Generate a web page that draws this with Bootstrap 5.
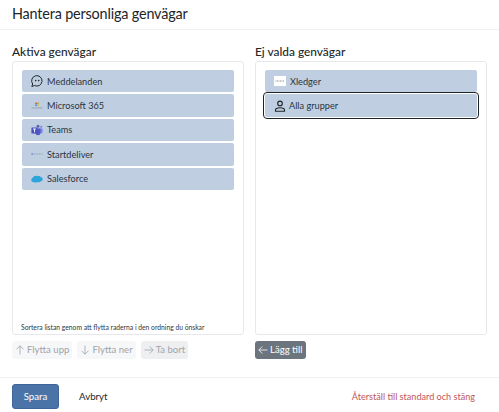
<!DOCTYPE html>
<html lang="sv">
<head>
<meta charset="utf-8">
<title>Hantera personliga genvägar</title>
<link href="https://cdn.jsdelivr.net/npm/bootstrap@5.3.0/dist/css/bootstrap.min.css" rel="stylesheet">
<style>
html,body{height:412px;overflow:hidden}
body{font-family:"Lato","Open Sans",sans-serif;color:#212529;background:#fff}
.dlg-head{height:30px;padding:0 12px;border-bottom:1px solid #eef0f2}
.dlg-title{font-size:14.4px;letter-spacing:-.17px;font-weight:400;line-height:28px;margin:0}
.dlg-body{padding:13px 12px 0;gap:11px;height:347px}
.pane{width:232px}
.pane-title{font-size:11.9px;font-weight:500;line-height:17px;margin:0 0 1px}
.pane-box{height:274px;border:1px solid #e6e8ea;border-radius:3px;padding:8px 9px 0;position:relative}
.pick{height:22.4px;margin-bottom:2px;background:#bfcfe1;border-radius:2px;font-size:9.2px;line-height:1;color:#2c3440;padding-left:9px;gap:4px;border:0;width:100%}
.pick svg{flex:none;width:12px;height:12px}
.pick-on{outline:1.5px solid #1f2328;outline-offset:1px}
.pick-on svg{margin-right:-1px}
.hint{position:absolute;left:8px;bottom:1px;font-size:6.75px;line-height:12px;color:#30363d;white-space:nowrap}
.tools{gap:5px;margin-top:6px}
.tool{height:18px;padding:0 3px;border:0;border-radius:3px;background:#f6f7f8;color:#9ea4aa;font-size:9.6px;gap:2px;line-height:1}
.tool-mid{background:#edeff1}
.tool-dark{background:#6c757d;color:#fff;padding:0 3px}
.tool svg{width:10px;height:10px}
.dlg-foot{height:35px;border-top:1px solid #eef0f2;padding:6px 12px 0}
.save{width:47px;height:25px;background:#4a74a8;border:1px solid #3f659a;color:#fff;border-radius:3px;font-size:9.7px;padding:0}
.cancel{height:25px;font-size:9.7px;color:#212529;padding:0;margin-left:20px;border:0;background:none}
.reset{height:25px;font-size:9.1px;color:#c0565a;padding:0;border:0;background:none;margin-right:12px}
</style>
</head>
<body>
<header class="dlg-head"><h1 class="dlg-title">Hantera personliga genvägar</h1></header>
<main class="dlg-body d-flex">
  <section class="pane">
    <h2 class="pane-title">Aktiva genvägar</h2>
    <div class="pane-box">
      <div class="pick d-flex align-items-center">
        <svg viewBox="0 0 12 12" fill="none" stroke="#23282e" stroke-width="1"><path d="M.8 11.500 1.700 9A5.200 5.200 0 1 1 3.500 10.500Z" /><circle cx="4.700" cy="5.600" r=".8" fill="#23282e" stroke="none"/><circle cx="7.700" cy="5.600" r=".8" fill="#23282e" stroke="none"/></svg>Meddelanden</div>
      <div class="pick d-flex align-items-center">
        <svg viewBox="0 0 12 12"><rect x="4.200" y="2.500" width="1.700" height="1.700" fill="#e0563a"/><rect x="6.100" y="2.500" width="1.700" height="1.700" fill="#8cb83a"/><rect x="4.200" y="4.400" width="1.700" height="1.700" fill="#3a9be0"/><rect x="6.100" y="4.400" width="1.700" height="1.700" fill="#eab52e"/><rect x=".5" y="7.500" width="11" height=".9" fill="#9aa0a8"/></svg>Microsoft 365</div>
      <div class="pick d-flex align-items-center">
        <svg viewBox="0 0 12 12"><circle cx="7" cy="2.200" r="1.500" fill="#6264a7"/><circle cx="10.200" cy="2.800" r="1.100" fill="#7b83eb"/><path d="M8 4.400h3.600v3.400a1.600 1.600 0 0 1-3.200.3Z" fill="#7b83eb"/><path d="M4.500 4.400h5v4.400a2.500 2.500 0 0 1-5 0Z" fill="#5059c9"/><rect x=".4" y="3.400" width="6.200" height="6.200" rx=".6" fill="#4b53bc"/><path d="M2 5h3M3.500 5v3.300" stroke="#fff" stroke-width=".9"/></svg>Teams</div>
      <div class="pick d-flex align-items-center">
        <svg viewBox="0 0 12 12"><rect x=".3" y="5.500" width="2" height="1" fill="#4f6fd0"/><path d="M3 6h8.700" stroke="#8a94a3" stroke-width=".8" stroke-dasharray="1 .6"/></svg>Startdeliver</div>
      <div class="pick d-flex align-items-center">
        <svg viewBox="0 0 12 12"><path d="M3 9.200C1.200 9.200.2 8 .3 6.800.4 5.700 1 5 1.800 4.700 2.300 3.400 3.500 2.900 4.500 3.200 5.200 2.600 6.500 2.500 7.300 3.200 8.200 2.800 9.300 3 9.800 3.900 11 4.200 11.800 5.200 11.700 6.300 11.600 7.700 10.500 8.500 9.300 8.400 8.500 9.300 7.300 9.500 6.400 8.900 5.500 9.600 3.900 9.700 3 9.200Z" fill="#2ea3dc"/></svg>Salesforce</div>
      <div class="hint">Sortera listan genom att flytta raderna i den ordning du önskar</div>
    </div>
    <div class="tools d-flex">
      <button class="tool d-flex align-items-center" type="button"><svg viewBox="0 0 10 10" fill="none" stroke="currentColor" stroke-width=".8"><path d="M5 9.500V.8M1.500 4.300 5 .8l3.500 3.500"/></svg>Flytta upp</button>
      <button class="tool d-flex align-items-center" type="button"><svg viewBox="0 0 10 10" fill="none" stroke="currentColor" stroke-width=".8"><path d="M5 .5v8.700M1.500 5.700 5 9.200l3.500-3.500"/></svg>Flytta ner</button>
      <button class="tool tool-mid d-flex align-items-center" type="button"><svg viewBox="0 0 10 10" fill="none" stroke="currentColor" stroke-width=".8"><path d="M.5 5h8.700M5.700 1.500 9.200 5 5.700 8.500"/></svg>Ta bort</button>
    </div>
  </section>
  <section class="pane">
    <h2 class="pane-title">Ej valda genvägar</h2>
    <div class="pane-box">
      <div class="pick d-flex align-items-center">
        <svg viewBox="0 0 12 12"><rect y="1" width="12" height="10" fill="#fff"/><path d="M1.500 6h9" stroke="#6b7280" stroke-width=".8" stroke-dasharray="1 .5"/></svg>Xledger</div>
      <div class="pick pick-on d-flex align-items-center">
        <svg viewBox="0 0 12 12" fill="none" stroke="#1f2328" stroke-width="1.100"><circle cx="6" cy="3.400" r="2.300"/><path d="M1.500 11.200V10c0-1.500 1.500-2.300 4.500-2.300s4.500.8 4.500 2.300v1.200Z"/></svg>Alla grupper</div>
    </div>
    <div class="tools d-flex">
      <button class="tool tool-dark d-flex align-items-center" type="button"><svg viewBox="0 0 10 10" fill="none" stroke="currentColor" stroke-width=".8"><path d="M9.500 5H.8M4.300 1.500.8 5l3.500 3.500"/></svg>Lägg till</button>
    </div>
  </section>
</main>
<footer class="dlg-foot d-flex align-items-start">
  <button class="save" type="button">Spara</button>
  <button class="cancel" type="button">Avbryt</button>
  <button class="reset ms-auto" type="button">Återställ till standard och stäng</button>
</footer>
</body>
</html>
